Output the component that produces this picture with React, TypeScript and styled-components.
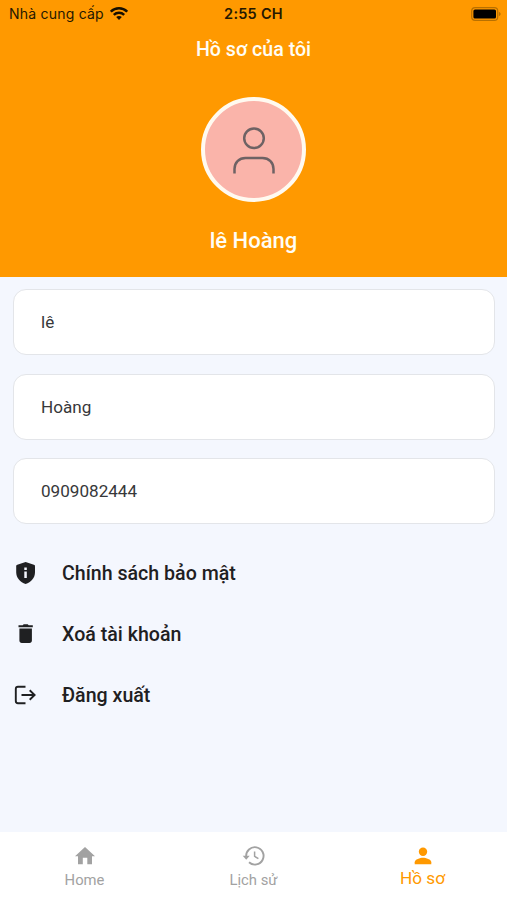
import React from "react";
import styled, { createGlobalStyle } from "styled-components";

const ORANGE = "#ff9900";

const GlobalStyle = createGlobalStyle`
  * { box-sizing: border-box; }
  body { margin: 0; font-family: Roboto, "Noto Sans", sans-serif; }
  svg { display: block; flex: none; }
`;

const Screen = styled.div`
  display: flex;
  flex-direction: column;
  width: 507px;
  height: 900px;
  overflow: hidden;
  background: #f4f7fe;
`;

const Header = styled.header`
  display: flex;
  flex-direction: column;
  align-items: center;
  height: 277px;
  flex: none;
  background: ${ORANGE};
  color: #fffdf5;
`;

const StatusBar = styled.div`
  display: grid;
  grid-template-columns: 1fr auto 1fr;
  align-items: center;
  width: 100%;
  height: 27px;
  padding: 0 6px 0 9px;
  font-family: Inter, Roboto, sans-serif;
  font-size: 14px;
  color: #251800;
`;

const Carrier = styled.div`
  display: flex;
  align-items: center;
  gap: 6px;
  letter-spacing: 0.22px;
  white-space: nowrap;
`;

const Clock = styled.div`
  font-weight: 600;
  font-size: 14.5px;
  letter-spacing: 0.25px;
  padding-right: 3px;
`;

const BatterySlot = styled.div`
  display: flex;
  justify-content: flex-end;
`;

const Title = styled.h1`
  margin: 10px 0 0;
  font-size: 19.6px;
  line-height: 26px;
  font-weight: 500;
`;

const Avatar = styled.div`
  display: flex;
  justify-content: center;
  width: 105px;
  height: 105px;
  margin-top: 34px;
  padding-top: 24.5px;
  border: 4px solid #fffaf0;
  border-radius: 50%;
  background: #fab4aa;
`;

const FullName = styled.div`
  margin-top: 24px;
  font-size: 22px;
  line-height: 30px;
  font-weight: 500;
`;

const Content = styled.main`
  flex: 1;
  padding: 12px 12.5px 0;
`;

const Fields = styled.div`
  display: flex;
  flex-direction: column;
  gap: 18.5px;
`;

const Field = styled.div`
  display: flex;
  align-items: center;
  height: 66px;
  padding-left: 27.5px;
  border: 1.5px solid #e3e5e9;
  border-radius: 13px;
  background: #fff;
  color: #37383a;
  font-size: 17.1px;
`;

const Menu = styled.div`
  display: flex;
  flex-direction: column;
  margin-top: 18.5px;
`;

const MenuItem = styled.div`
  display: flex;
  align-items: center;
  gap: 24.5px;
  height: 61px;
  color: #1f2022;
  font-size: 19.6px;
  font-weight: 500;
`;

const TabBar = styled.nav`
  display: grid;
  grid-template-columns: repeat(3, 1fr);
  height: 68px;
  flex: none;
  background: #fff;
`;

const Tab = styled.div<{ $active?: boolean }>`
  display: flex;
  flex-direction: column;
  align-items: center;
  padding-top: 13px;
  color: ${(p) => (p.$active ? ORANGE : "#a2a2a2")};
  font-size: ${(p) => (p.$active ? 17.2 : 14.8)}px;
  line-height: 22px;
`;

const TabLabel = styled.span<{ $raised?: boolean }>`
  margin-top: ${(p) => (p.$raised ? 0 : 2)}px;
`;

const WifiIcon = () => (
  <svg width="18" height="13" viewBox="0 0 18 13" fill="none" stroke="#171000" strokeWidth="2.5">
    <path d="M.8 4.7C5.4.2 12.6.2 17.2 4.7" />
    <path d="M3.8 7.9c3-2.8 7.4-2.8 10.4 0" />
    <path d="M9 13 6.2 10.1c1.6-1.4 4-1.4 5.6 0Z" fill="#171000" stroke="none" />
  </svg>
);

const BatteryIcon = () => (
  <svg width="30" height="14" viewBox="0 0 30 14">
    <rect x=".7" y=".7" width="26" height="12.6" rx="3.4" fill="none" stroke="#b87000" strokeWidth="1.2" />
    <rect x="2.4" y="2.4" width="22.6" height="9.2" rx="1.6" fill="#000" />
    <path d="M27.8 4.8c2.4.8 2.4 3.6 0 4.4Z" fill="#b87000" />
  </svg>
);

const PersonOutline = () => (
  <svg width="44" height="50" viewBox="0 0 44 50" fill="none" stroke="#6e6264" strokeWidth="2.5">
    <circle cx="22" cy="12.3" r="9.8" />
    <path d="M2.5 47.5V43c0-6.5 4.5-11 11-11h17c6.5 0 11 4.5 11 11v4.5" />
  </svg>
);

const ShieldIcon = () => (
  <svg width="25" height="24" viewBox="0 0 25 24">
    <path
      d="M12.6.9 20.9 3.7C21.7 4 22 4.5 22 5.3V11c0 6-4 10.3-9.4 12C7.2 21.3 3.2 17 3.2 11V5.3c0-.8.3-1.300 1.100-1.600Z"
      fill="currentColor"
    />
    <path d="M11.3 6.5h2.5V9h-2.5ZM11.3 10.5h2.5v6.5h-2.5Z" fill="#f4f7fe" />
  </svg>
);

const TrashIcon = () => (
  <svg width="25" height="24" viewBox="0 0 25 24" fill="currentColor">
    <path d="M5.500 3.200h4.200l1-1h4l1 1h4.100v2h-14.300ZM6.400 6.500h12.500v12c0 1.500-.9 2.400-2.400 2.400H8.800c-1.500 0-2.400-.9-2.400-2.400Z" />
  </svg>
);

const LogoutIcon = () => (
  <svg width="25" height="24" viewBox="0 0 25 24" fill="none" stroke="currentColor" strokeWidth="1.9">
    <path d="M12.500 3.700H5c-1.500 0-2.200.7-2.200 2.200v12.200c0 1.500.7 2.200 2.200 2.200h7.500M8.500 12h13M16.700 7.200l4.900 4.800-4.900 4.800" />
  </svg>
);

const HomeIcon = () => (
  <svg width="24" height="22" viewBox="0 0 24 22" fill="currentColor">
    <path d="M12 2 22 11.2h-3v8h-4.700v-6.500H9.800v6.500H5v-8H2Z" />
  </svg>
);

const HistoryIcon = () => (
  <svg width="24" height="22" viewBox="0 0 24 22" fill="none" stroke="currentColor" strokeWidth="1.9">
    <path d="M4.200 11.700a8.700 8.700 0 1 1 2.800 5.600" />
    <path d="M.7 10.800h7L4.200 14.700Z" fill="currentColor" stroke="none" />
    <path d="M12.600 6.500v4.900l3.800 2.300" strokeWidth="1.5" />
  </svg>
);

const ProfileIcon = () => (
  <svg width="24" height="22" viewBox="0 0 24 22" fill="currentColor">
    <circle cx="12" cy="6.800" r="4.200" />
    <path d="M3.700 19.200v-2c0-3 5.500-4.500 8.300-4.500s8.300 1.500 8.300 4.500v2Z" />
  </svg>
);

const fields = ["lê", "Hoàng", "0909082444"];

const menu = [
  { label: "Chính sách bảo mật", icon: <ShieldIcon /> },
  { label: "Xoá tài khoản", icon: <TrashIcon /> },
  { label: "Đăng xuất", icon: <LogoutIcon /> },
];

export default function App() {
  return (
    <>
      <GlobalStyle />
      <Screen>
        <Header>
          <StatusBar>
            <Carrier>
              Nhà cung cấp
              <WifiIcon />
            </Carrier>
            <Clock>2:55 CH</Clock>
            <BatterySlot>
              <BatteryIcon />
            </BatterySlot>
          </StatusBar>
          <Title>Hồ sơ của tôi</Title>
          <Avatar>
            <PersonOutline />
          </Avatar>
          <FullName>lê Hoàng</FullName>
        </Header>
        <Content>
          <Fields>
            {fields.map((value) => (
              <Field key={value}>{value}</Field>
            ))}
          </Fields>
          <Menu>
            {menu.map((item) => (
              <MenuItem key={item.label}>
                {item.icon}
                {item.label}
              </MenuItem>
            ))}
          </Menu>
        </Content>
        <TabBar>
          <Tab>
            <HomeIcon />
            <TabLabel>Home</TabLabel>
          </Tab>
          <Tab>
            <HistoryIcon />
            <TabLabel>Lịch sử</TabLabel>
          </Tab>
          <Tab $active>
            <ProfileIcon />
            <TabLabel $raised>Hồ sơ</TabLabel>
          </Tab>
        </TabBar>
      </Screen>
    </>
  );
}
